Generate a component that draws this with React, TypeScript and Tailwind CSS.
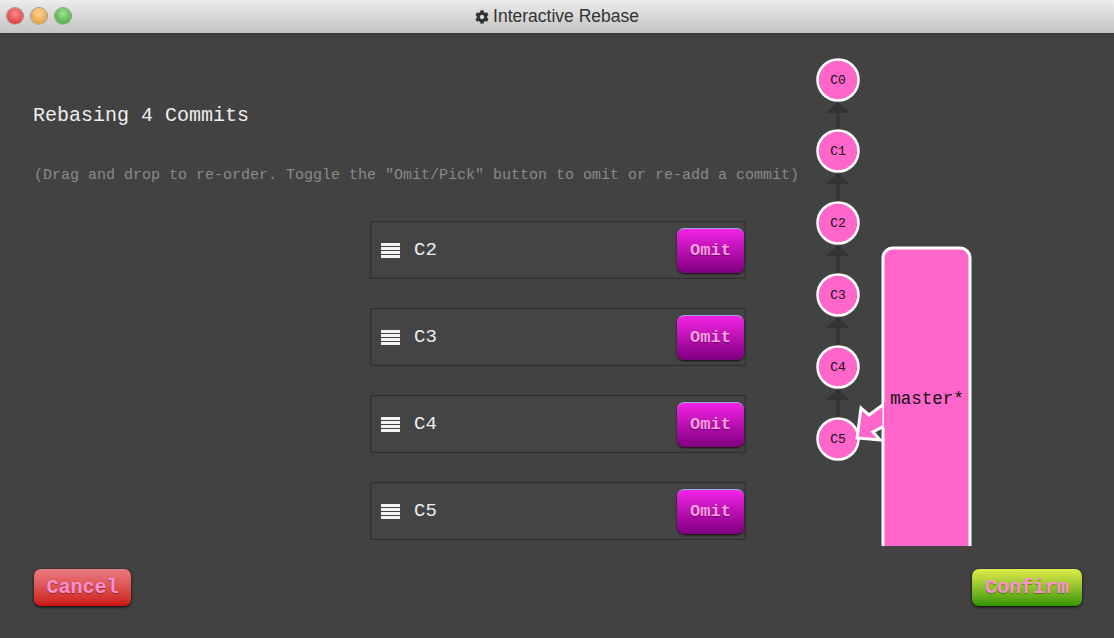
import { FaCog } from 'react-icons/fa';

const commits = ['C2', 'C3', 'C4', 'C5'];
const nodes = [
  { id: 'C0', y: 79 },
  { id: 'C1', y: 150 },
  { id: 'C2', y: 222 },
  { id: 'C3', y: 294 },
  { id: 'C4', y: 366 },
  { id: 'C5', y: 438 },
];

function Graph() {
  return (
    <svg
      className="absolute left-[800px] top-0 w-[200px] h-[512px]"
      viewBox="800 33 200 512"
    >
      {nodes.slice(1).map((n, i) => {
        const top = nodes[i].y + 22;
        return (
          <g key={n.id} fill="#333333">
            <polygon points={`838,${top} 826,${top + 11} 850,${top + 11}`} />
            <rect x={836.5} y={top + 10} width={3} height={n.y - 21 - top - 9} />
          </g>
        );
      })}
      {nodes.map((n) => (
        <g key={n.id}>
          <circle cx={838} cy={n.y} r={20.5} fill="#ff66cc" stroke="#fff" strokeWidth={2.5} />
          <text
            x={838}
            y={n.y + 4}
            textAnchor="middle"
            fontSize={13}
            fontFamily="'Liberation Mono', monospace"
            fill="#111"
          >
            {n.id}
          </text>
        </g>
      ))}
      <rect x={883} y={247} width={87} height={320} rx={10} fill="#ff66cc" stroke="#fff" strokeWidth={3} />
      <polygon
        points="884,403 869,414 861,407 857,437 880,439 873,431 884,425"
        fill="#ff66cc"
        stroke="#fff"
        strokeWidth={3}
        strokeLinejoin="miter"
      />
      <rect x={884} y={401} width={6} height={26} fill="#ff66cc" />
      <text
        x={927}
        y={403}
        textAnchor="middle"
        fontSize={17.5}
        fontFamily="'Liberation Mono', monospace"
        fill="#111"
      >
        master*
      </text>
    </svg>
  );
}

function CommitRow({ name }: { name: string }) {
  return (
    <div className="flex items-center h-[58px] w-[376px] border border-[#303030] bg-[#444444] shadow-[inset_0_0_2px_rgba(0,0,0,0.3)] pl-[10px] pr-[1px]">
      <div className="flex flex-col gap-[1px] w-[19px]">
        <div className="h-[3px] bg-[#f2f2f2]" />
        <div className="h-[3px] bg-[#f2f2f2]" />
        <div className="h-[3px] bg-[#f2f2f2]" />
        <div className="h-[3px] bg-[#f2f2f2]" />
      </div>
      <span className="ml-[14px] text-[19px] text-[#eeeeee] font-['Liberation_Mono',monospace]">{name}</span>
      <button className="ml-auto w-[67px] h-[45px] rounded-[7px] border-t border-t-[#9ad] bg-gradient-to-b from-[#f522e6] to-[#800080] shadow-[0_1px_2px_rgba(0,0,0,0.8)] text-[17px] font-bold text-[#ff9ee0] font-['Liberation_Mono',monospace] [text-shadow:0_1px_1px_rgba(0,0,0,0.4)]">
        Omit
      </button>
    </div>
  );
}

export default function App() {
  return (
    <div className="w-[1114px] h-[638px] flex flex-col bg-[#424242] overflow-hidden">
      <div className="relative h-[34px] shrink-0 flex items-center justify-center bg-gradient-to-b from-[#ececec] to-[#c4c4c4] border-b border-[#3a3a3a]">
        <div className="absolute left-[7px] top-[8px] flex gap-[8px]">
          <div className="w-[16px] h-[16px] rounded-full bg-[radial-gradient(circle_at_50%_35%,#ff8a8a,#d42a2a)] shadow-[0_0_0_1px_rgba(0,0,0,0.35),0_1px_1px_#fff]" />
          <div className="w-[16px] h-[16px] rounded-full bg-[radial-gradient(circle_at_50%_35%,#ffd38a,#d8962e)] shadow-[0_0_0_1px_rgba(0,0,0,0.35),0_1px_1px_#fff]" />
          <div className="w-[16px] h-[16px] rounded-full bg-[radial-gradient(circle_at_50%_35%,#9be68b,#3c9e35)] shadow-[0_0_0_1px_rgba(0,0,0,0.35),0_1px_1px_#fff]" />
        </div>
        <div className="flex items-center gap-[4px] text-[#333] text-[17.5px] font-['Liberation_Sans',Arial,sans-serif]">
          <FaCog className="w-[14px] h-[14px]" />
          <span>Interactive Rebase</span>
        </div>
      </div>

      <div className="relative flex-1 flex flex-col">
        <Graph />
        <div className="h-[511px] flex flex-col">
          <h1 className="mt-[70px] ml-[33px] text-[20px] leading-[24px] text-[#eeeeee] font-['Liberation_Mono',monospace]">
            Rebasing 4 Commits
          </h1>
          <p className="mt-[39px] ml-[34px] text-[15px] leading-[18px] text-[#8a8a8a] font-['Liberation_Mono',monospace]">
            (Drag and drop to re-order. Toggle the "Omit/Pick" button to omit or re-add a commit)
          </p>
          <div className="mt-[36px] flex flex-col items-center gap-[29px] pl-[2px]">
            {commits.map((c) => (
              <CommitRow key={c} name={c} />
            ))}
          </div>
        </div>
        <div className="flex justify-between pl-[34px] pr-[32px] pt-[24px]">
          <button className="w-[97px] h-[37px] rounded-[7px] bg-gradient-to-b from-[#ea7a82] to-[#cc1010] shadow-[0_1px_3px_rgba(0,0,0,0.9)] text-[20px] font-bold text-[#ff8fd0] font-['Liberation_Mono',monospace] [text-shadow:0_1px_1px_rgba(0,0,0,0.35)]">
            Cancel
          </button>
          <button className="w-[110px] h-[37px] rounded-[7px] bg-gradient-to-b from-[#e0ec4c] to-[#2e9600] shadow-[0_1px_3px_rgba(0,0,0,0.9)] text-[20px] font-bold text-[#ff8fd0] font-['Liberation_Mono',monospace] [text-shadow:0_1px_1px_rgba(0,0,0,0.35)]">
            Confirm
          </button>
        </div>
      </div>
    </div>
  );
}
